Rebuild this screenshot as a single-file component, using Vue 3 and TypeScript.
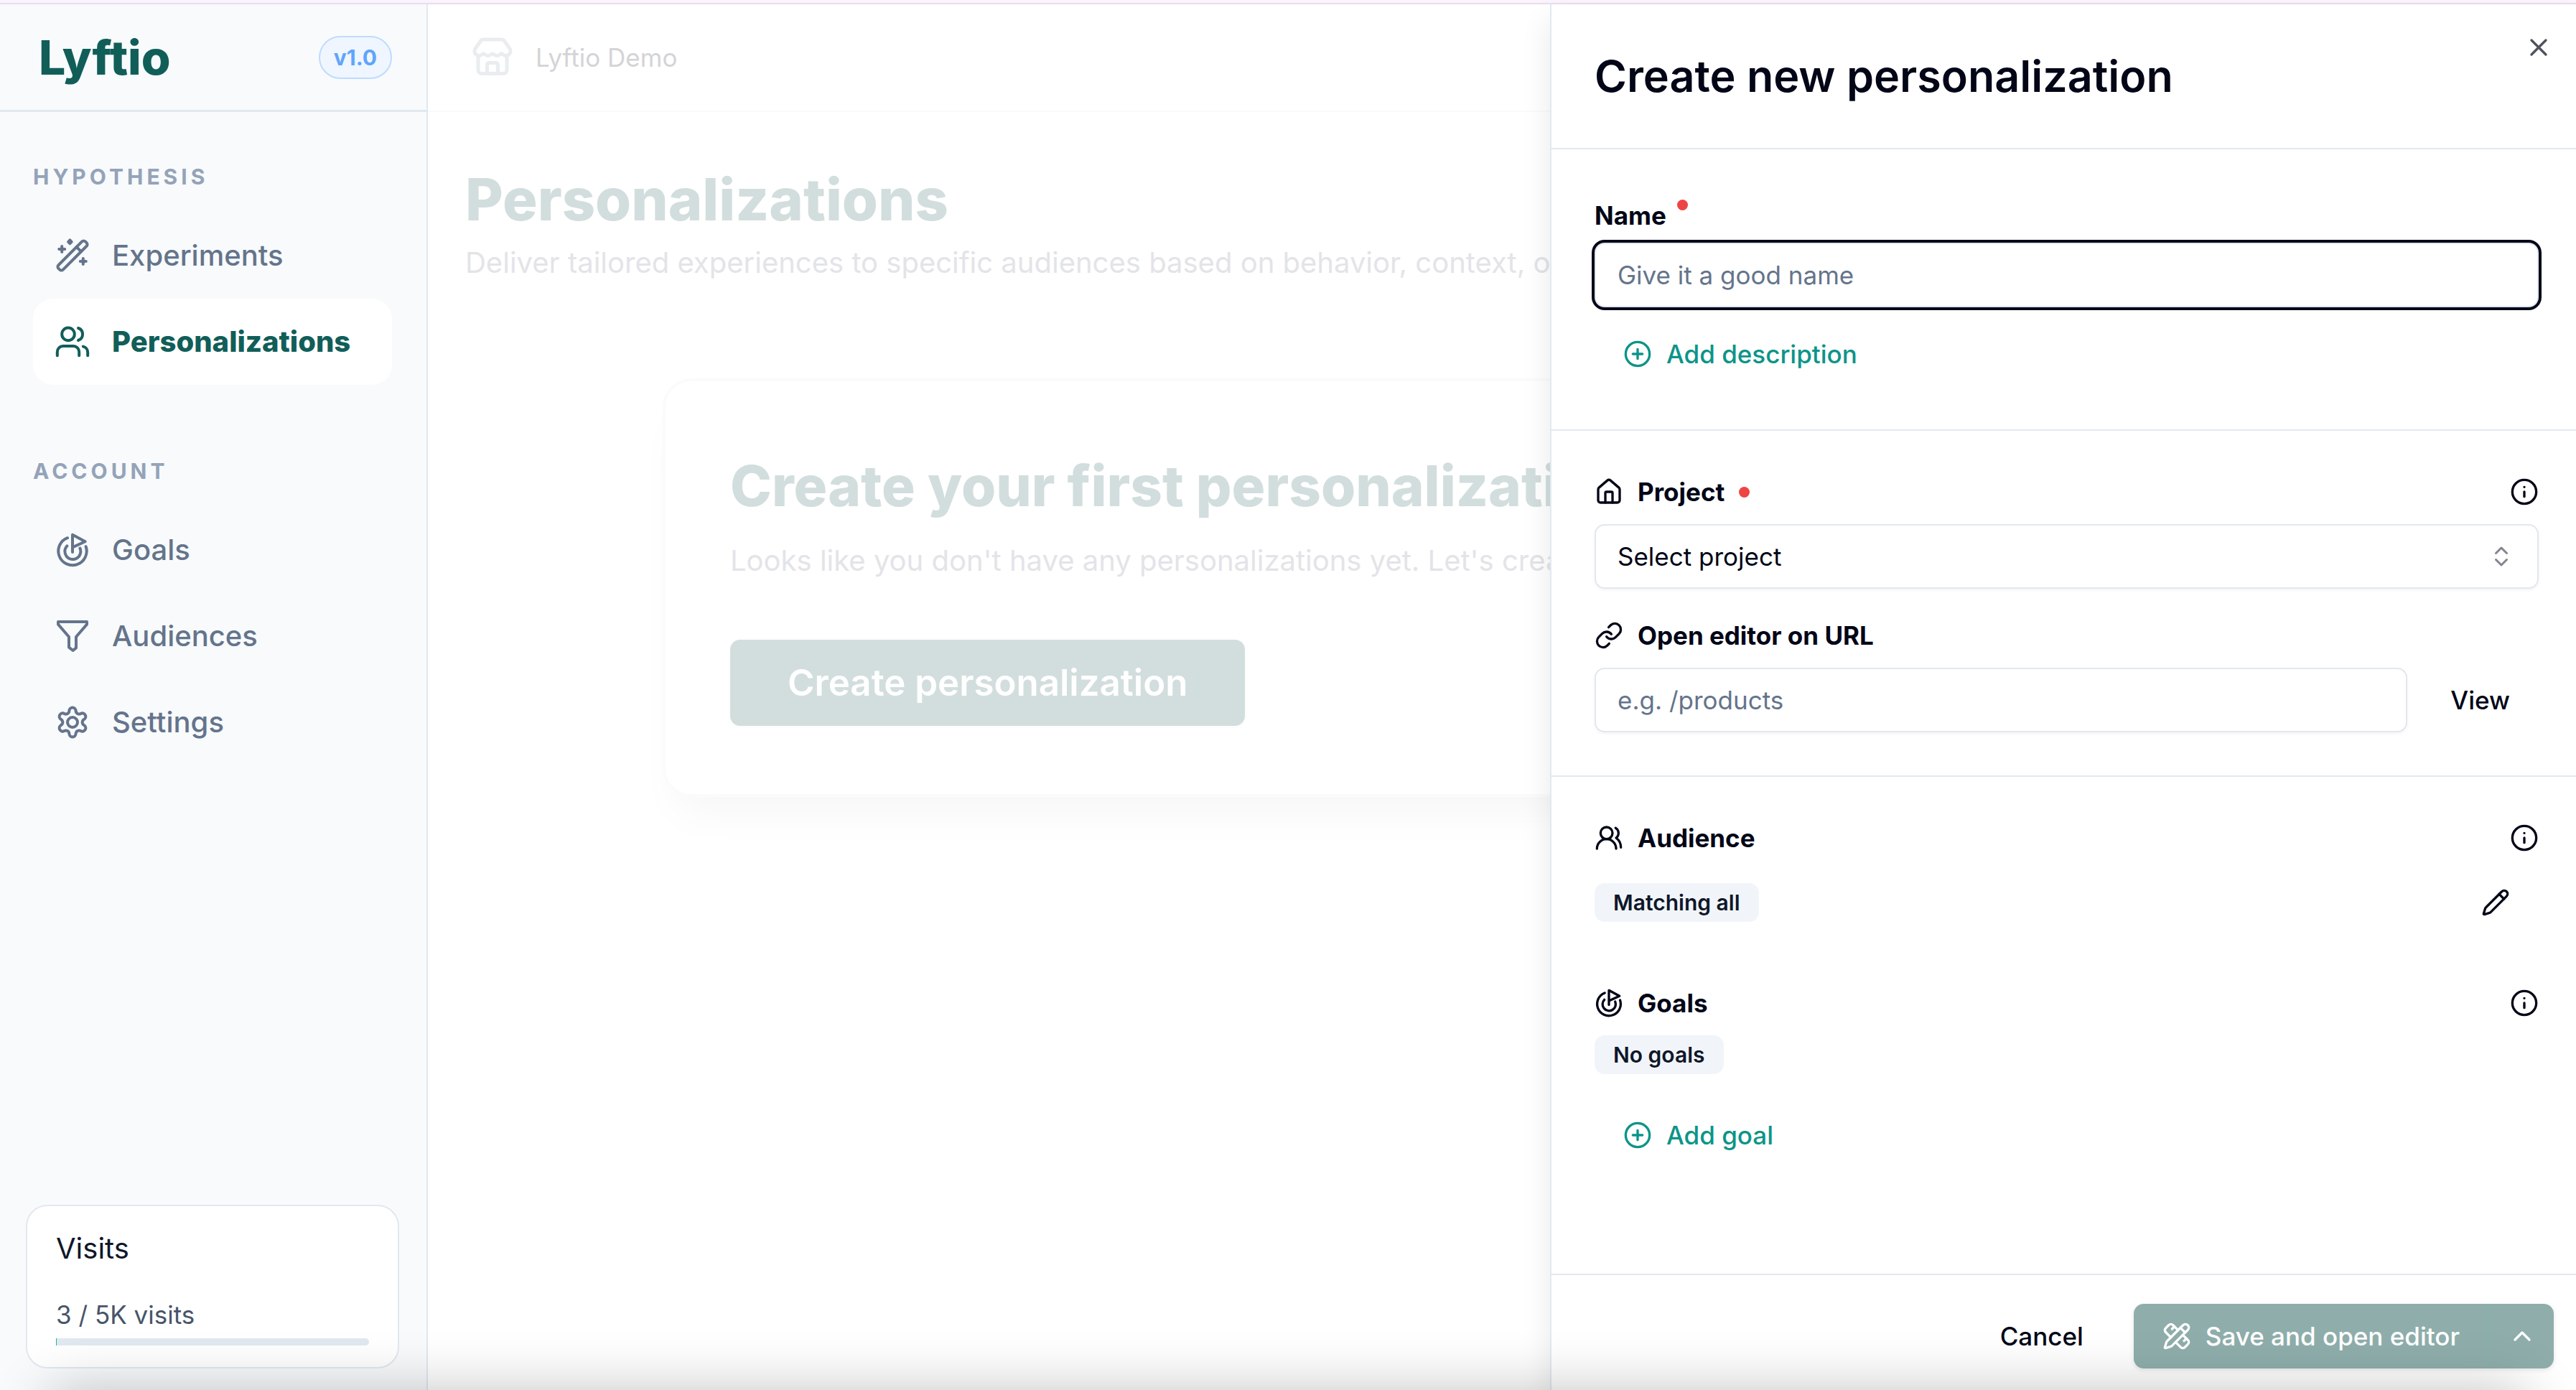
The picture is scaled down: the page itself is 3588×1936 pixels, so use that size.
<script setup lang="ts">
import { computed, h, ref } from 'vue'
import type { FunctionalComponent } from 'vue'

const pencil = [
  'M21.174 6.812a1 1 0 0 0-3.986-3.987L3.842 16.174a2 2 0 0 0-.5.830l-1.321 4.352a.5.5 0 0 0 .623.622l4.353-1.320a2 2 0 0 0 .830-.497z',
  'm15 5 4 4',
]

const glyphs: Record<string, string[]> = {
  wand: [
    'M18.600 2.200a1.600 1.600 0 0 1 2.300 0l.9.9a1.600 1.600 0 0 1 0 2.300L5.400 21.800a1.600 1.600 0 0 1-2.300 0l-.9-.9a1.600 1.600 0 0 1 0-2.300z',
    'm14.800 6 3.200 3.200',
    'M4.600 5.500v4M2.600 7.500h4M19.400 14v4M17.400 16h4',
    'm10.200 1.200 1.100 1.200-1.100 1.200-1.100-1.200z',
  ],
  people: [
    'M9 11.100a4.400 4.400 0 1 0 0-8.800 4.400 4.400 0 0 0 0 8.800z',
    'M1.400 21.600V19a4 4 0 0 1 4-4h7.200a4 4 0 0 1 4 4v2.600',
    'M16 2.500a4.500 4.500 0 0 1 0 8.500',
    'M19.400 15.300a4.200 4.200 0 0 1 3.200 4v2.300',
  ],
  goal: [
    'M12 13.500V1.400l8.800 4.700L12 10.200',
    'M8.500 3.600A9.840 9.840 0 1 0 21.300 9.600',
    'M8.200 9.200A5.500 5.500 0 1 0 17.200 10.800',
  ],
  funnel: ['M2 2h20v1.800l-7.500 8.700v7.700L12.300 22l-2.800-2.200v-7.300L2 3.800z'],
  gear: [
    'M12 15.500a3.500 3.500 0 1 0 0-7 3.500 3.500 0 0 0 0 7z',
    'M9.700 4.100a2.300 2.300 0 0 1 4.600 0 2.300 2.300 0 0 0 3.400 1.900 2.300 2.300 0 0 1 2.300 4 2.300 2.300 0 0 0 0 4 2.300 2.300 0 0 1-2.300 4 2.300 2.300 0 0 0-3.400 1.900 2.300 2.300 0 0 1-4.600 0A2.300 2.300 0 0 0 6.300 18 2.300 2.300 0 0 1 4 14a2.300 2.300 0 0 0 0-4 2.300 2.300 0 0 1 2.300-4 2.300 2.300 0 0 0 3.400-1.900',
  ],
  store: [
    'M15 21v-5a1 1 0 0 0-1-1h-4a1 1 0 0 0-1 1v5',
    'M17.774 10.310a1.120 1.120 0 0 0-1.549 0 2.500 2.500 0 0 1-3.451 0 1.120 1.120 0 0 0-1.548 0 2.500 2.500 0 0 1-3.452 0 1.120 1.120 0 0 0-1.549 0 2.500 2.500 0 0 1-3.770-3.248l2.889-4.184A2 2 0 0 1 7 2h10a2 2 0 0 1 1.653.873l2.895 4.192a2.500 2.500 0 0 1-3.774 3.244',
    'M4 10.950V19a2 2 0 0 0 2 2h12a2 2 0 0 0 2-2v-8.050',
  ],
  plusCircle: ['M12 22a10 10 0 1 0 0-20 10 10 0 0 0 0 20z', 'M8 12h8M12 8v8'],
  info: ['M12 22a10 10 0 1 0 0-20 10 10 0 0 0 0 20z', 'M12 16v-4M12 8h.01'],
  home: [
    'M15 21v-8a1 1 0 0 0-1-1h-4a1 1 0 0 0-1 1v8',
    'M3 10a2 2 0 0 1 .709-1.528l7-5.999a2 2 0 0 1 2.582 0l7 5.999A2 2 0 0 1 21 10v9a2 2 0 0 1-2 2H5a2 2 0 0 1-2-2z',
  ],
  link: [
    'M10 13a5 5 0 0 0 7.540.540l3-3a5 5 0 0 0-7.070-7.070l-1.720 1.710',
    'M14 11a5 5 0 0 0-7.540-.540l-3 3a5 5 0 0 0 7.070 7.070l1.710-1.710',
  ],
  audience: [
    'M18 21a8 8 0 0 0-16 0',
    'M10 13a5 5 0 1 0 0-10 5 5 0 0 0 0 10z',
    'M22 20c0-3.370-2-6.500-4-8a5 5 0 0 0-.450-8.300',
  ],
  pencil,
  close: ['M18 6 6 18M6 6l12 12'],
  sort: ['m7 15 5 5 5-5M7 9l5-5 5 5'],
  up: ['m18 15-6-6-6 6'],
  design: [
    'M13 7 8.700 2.700a2.410 2.410 0 0 0-3.400 0L2.700 5.300a2.410 2.410 0 0 0 0 3.400L7 13',
    'm8 6 2-2M18 16l2-2',
    'm17 11 4.300 4.300c.940.940.940 2.460 0 3.400l-2.600 2.600c-.940.940-2.460.940-3.400 0L11 17',
    ...pencil,
  ],
}

const Icon: FunctionalComponent<{ name: string }> = (props) =>
  h(
    'svg',
    { viewBox: '0 0 24 24', class: 'icon', 'aria-hidden': 'true' },
    glyphs[props.name].map((d) => h('path', { d })),
  )
Icon.props = ['name']

const groups = [
  {
    title: 'HYPOTHESIS',
    items: [
      { label: 'Experiments', icon: 'wand', active: false },
      { label: 'Personalizations', icon: 'people', active: true },
    ],
  },
  {
    title: 'ACCOUNT',
    items: [
      { label: 'Goals', icon: 'goal', active: false },
      { label: 'Audiences', icon: 'funnel', active: false },
      { label: 'Settings', icon: 'gear', active: false },
    ],
  },
]

const visits = ref(3)
const quota = 5000
const usage = computed(() => `${(visits.value / quota) * 100}%`)

const name = ref('')
const url = ref('')
const project = ref('')
</script>

<template>
  <div class="app">
    <div class="strip"></div>
    <div class="shell">
      <aside class="sidebar">
        <div class="brand">
          <span class="logo">Lyftio</span>
          <span class="version">v1.0</span>
        </div>
        <nav class="nav">
          <section v-for="group in groups" :key="group.title" class="group">
            <h2 class="group-title">{{ group.title }}</h2>
            <a
              v-for="item in group.items"
              :key="item.label"
              href="#"
              class="nav-item"
              :class="{ active: item.active }"
            >
              <Icon :name="item.icon" />
              <span>{{ item.label }}</span>
            </a>
          </section>
        </nav>
        <div class="visits">
          <div class="visits-title">Visits</div>
          <div class="visits-count">{{ visits }} / 5K visits</div>
          <div class="meter"><div class="meter-fill" :style="{ width: usage }"></div></div>
        </div>
      </aside>

      <main class="main">
        <header class="topbar">
          <Icon name="store" />
          <span>Lyftio Demo</span>
        </header>
        <div class="content">
          <h1 class="page-title">Personalizations</h1>
          <p class="page-text">
            Deliver tailored experiences to specific audiences based on behavior, context, or intent.
          </p>
          <section class="card">
            <h2 class="card-title">Create your first personalization</h2>
            <p class="page-text">Looks like you don't have any personalizations yet. Let's create one.</p>
            <button type="button" class="card-button">Create personalization</button>
          </section>
        </div>
      </main>

      <form class="panel" @submit.prevent>
        <header class="panel-header">
          <h2 class="panel-title">Create new personalization</h2>
          <button type="button" class="icon-button close" aria-label="Close"><Icon name="close" /></button>
        </header>

        <section class="block name-block">
          <label for="name" class="name-label">Name<span class="dot"></span></label>
          <input id="name" v-model="name" class="field focused" type="text" placeholder="Give it a good name" />
          <button type="button" class="add"><Icon name="plusCircle" />Add description</button>
        </section>

        <section class="block">
          <div class="row">
            <label for="project" class="label"><Icon name="home" />Project<span class="dot"></span></label>
            <button type="button" class="icon-button" aria-label="About project"><Icon name="info" /></button>
          </div>
          <div class="select">
            <select id="project" v-model="project" class="field">
              <option value="">Select project</option>
            </select>
            <Icon name="sort" />
          </div>
          <div class="row spaced">
            <label for="url" class="label"><Icon name="link" />Open editor on URL</label>
          </div>
          <div class="url-row">
            <input id="url" v-model="url" class="field" type="text" placeholder="e.g. /products" />
            <button type="button" class="plain">View</button>
          </div>
        </section>

        <section class="block last">
          <div class="row">
            <h3 class="label"><Icon name="audience" />Audience</h3>
            <button type="button" class="icon-button" aria-label="About audience"><Icon name="info" /></button>
          </div>
          <div class="tag-row">
            <span class="tag">Matching all</span>
            <button type="button" class="plain" aria-label="Edit audience"><Icon name="pencil" /></button>
          </div>
          <div class="row goals-row">
            <h3 class="label"><Icon name="goal" />Goals</h3>
            <button type="button" class="icon-button" aria-label="About goals"><Icon name="info" /></button>
          </div>
          <span class="tag goals-tag">No goals</span>
          <button type="button" class="add goals-add"><Icon name="plusCircle" />Add goal</button>
        </section>

        <footer class="panel-footer">
          <button type="button" class="plain">Cancel</button>
          <div class="split">
            <button type="submit" class="save"><Icon name="design" />Save and open editor</button>
            <button type="button" class="more" aria-label="More save options"><Icon name="up" /></button>
          </div>
        </footer>
      </form>
    </div>
    <div class="bottom-shade"></div>
  </div>
</template>

<style>
body {
  margin: 0;
  background: #fff;
}
</style>

<style scoped>
.app {
  position: relative;
  display: flex;
  flex-direction: column;
  min-height: 100vh;
  overflow: hidden;
  background: #fff;
  color: #020617;
  font-family: Inter, 'Liberation Sans', sans-serif;
  font-size: 35px;
  line-height: 44px;
}
.app * {
  box-sizing: border-box;
}
h1,
h2,
h3,
p {
  margin: 0;
  font-size: inherit;
  font-weight: inherit;
}
button,
input,
select {
  margin: 0;
  padding: 0;
  border: 0;
  background: none;
  color: inherit;
  font: inherit;
}
.icon {
  flex: none;
  width: 40px;
  height: 40px;
  fill: none;
  stroke: currentColor;
  stroke-width: 2;
  stroke-linecap: round;
  stroke-linejoin: round;
}
.strip {
  height: 6px;
  background: #fbf3fd;
  border-bottom: 2px solid #e8deea;
}
.shell {
  position: relative;
  flex: 1;
  display: grid;
  grid-template-columns: 596px minmax(0, 1fr);
}

/* Sidebar */
.sidebar {
  display: flex;
  flex-direction: column;
  background: #f8fafc;
  border-right: 2px solid #e2e8f0;
}
.brand {
  display: flex;
  align-items: center;
  justify-content: space-between;
  height: 150px;
  padding: 0 48px 0 54px;
  border-bottom: 3px solid #e2e8f0;
}
.logo {
  color: #115e59;
  font-size: 66px;
  font-weight: 800;
  line-height: 80px;
}
.version {
  height: 60px;
  padding: 0 19px;
  border: 2px solid #bfdbfe;
  border-radius: 30px;
  background: #eff6ff;
  color: #60a5fa;
  font-size: 30px;
  font-weight: 700;
  line-height: 56px;
}
.nav {
  flex: 1;
  display: flex;
  flex-direction: column;
  gap: 95px;
  padding: 65px 48px 0 46px;
}
.group {
  display: flex;
  flex-direction: column;
}
.group-title {
  margin-bottom: 25px;
  color: #94a3b8;
  font-size: 30px;
  font-weight: 700;
  letter-spacing: 5px;
  line-height: 50px;
}
.nav-item {
  display: flex;
  align-items: center;
  gap: 31px;
  height: 120px;
  padding: 0 31px;
  border-radius: 28px;
  color: #64748b;
  font-size: 40px;
  font-weight: 500;
  text-decoration: none;
}
.nav-item .icon {
  width: 48px;
  height: 48px;
}
.nav-item.active {
  background: #fff;
  color: #115e59;
  font-weight: 800;
}
.visits {
  margin: 0 38px 30px 36px;
  padding: 29px 40px 30px;
  border: 2px solid #e2e8f0;
  border-radius: 30px;
  background: #fff;
}
.visits-title {
  color: #0f172a;
  font-size: 40px;
  line-height: 60px;
}
.visits-count {
  margin-top: 40px;
  color: #475569;
}
.meter {
  height: 10px;
  margin-top: 11px;
  border-radius: 0 5px 5px 0;
  background: #e2e8f0;
}
.meter-fill {
  min-width: 1px;
  height: 100%;
  background: #14b8a6;
}

/* Page behind the panel */
.main {
  min-width: 0;
  overflow: hidden;
}
.topbar {
  display: flex;
  align-items: center;
  gap: 30px;
  height: 150px;
  padding-left: 60px;
  border-bottom: 2px solid #f9fafb;
  color: #d3d4d7;
}
.topbar .icon {
  width: 60px;
  height: 60px;
  color: #e9edf0;
}
.content {
  padding: 72px 52px 0;
}
.page-title {
  color: #d2dedd;
  font-size: 81px;
  font-weight: 800;
  line-height: 100px;
}
.page-text {
  margin-top: 10px;
  color: #e3e4e8;
  font-size: 40px;
  line-height: 56px;
  white-space: nowrap;
}
.card {
  max-width: 2338px;
  margin: 133px auto 0;
  padding: 96px 90px 95px;
  border: 4px solid #fafbfb;
  border-radius: 40px;
  box-shadow: 0 40px 60px -20px rgba(0, 0, 0, 0.04);
}
.card-title {
  color: #d2dedd;
  font-size: 78px;
  font-weight: 800;
  line-height: 100px;
  white-space: nowrap;
}
.card .page-text {
  margin-top: 26px;
}
.card-button {
  display: block;
  height: 120px;
  margin-top: 82px;
  padding: 0 80px;
  border-radius: 14px;
  background: #d2dedd;
  box-shadow: 0 2px 6px rgba(0, 0, 0, 0.02);
  color: #fff;
  font-size: 51px;
  font-weight: 600;
}

/* Slide-over panel */
.panel {
  position: absolute;
  inset: 0 0 0 auto;
  display: flex;
  flex-direction: column;
  width: 40%;
  max-width: 1429px;
  border-left: 2px solid #e2e8f0;
  background: #fff;
  box-shadow: 0 20px 40px rgba(0, 0, 0, 0.09);
}
.panel-header {
  display: flex;
  align-items: center;
  justify-content: space-between;
  height: 202px;
  padding: 0 32px 0 60px;
  border-bottom: 2px solid #e2e8f0;
}
.panel-title {
  font-size: 61px;
  font-weight: 600;
  line-height: 80px;
}
.icon-button {
  display: flex;
}
.close {
  align-self: flex-start;
  margin-top: 40px;
  color: #4e525d;
}
.block {
  display: flex;
  flex-direction: column;
  padding: 60px 52px 60px 60px;
  border-bottom: 2px solid #e2e8f0;
}
.block.last {
  flex: 1;
  border-bottom: 0;
}
.name-block {
  padding-top: 70px;
}
.name-label {
  display: flex;
  gap: 15px;
  margin-bottom: 16px;
  font-weight: 700;
}
.dot {
  width: 15px;
  height: 15px;
  border-radius: 50%;
  background: #ef4444;
}
.field {
  width: 100%;
  height: 90px;
  padding: 0 30px;
  border: 2px solid #e2e8f0;
  border-radius: 14px;
  background: #fff;
  box-shadow: 0 2px 4px rgba(0, 0, 0, 0.05);
  outline: 0;
  appearance: none;
}
.field::placeholder {
  color: #64748b;
  opacity: 1;
}
.field.focused {
  box-shadow: 0 0 0 4px #020617;
}
.add {
  display: flex;
  align-items: center;
  align-self: flex-start;
  gap: 20px;
  height: 90px;
  margin-top: 20px;
  padding: 0 40px;
  color: #0d9488;
  font-weight: 500;
}
.row {
  display: flex;
  align-items: center;
  justify-content: space-between;
  height: 50px;
  margin-bottom: 20px;
}
.row.spaced {
  margin-top: 40px;
}
.label {
  display: flex;
  align-items: center;
  gap: 20px;
  font-weight: 700;
}
.select {
  display: grid;
  align-items: center;
}
.select > * {
  grid-area: 1 / 1;
}
.select .icon {
  width: 36px;
  height: 36px;
  justify-self: end;
  margin-right: 34px;
  color: #84868f;
  pointer-events: none;
}
.url-row {
  display: flex;
  gap: 20px;
}
.url-row .field {
  flex: 1;
}
.plain {
  display: flex;
  align-items: center;
  height: 90px;
  padding: 0 40px;
  font-weight: 500;
}
.tag-row {
  display: flex;
  align-items: center;
  justify-content: space-between;
}
.tag {
  height: 54px;
  padding: 0 26px;
  border-radius: 14px;
  background: #f1f5f9;
  color: #0f172a;
  font-size: 30px;
  font-weight: 600;
  line-height: 54px;
}
.goals-row {
  margin-top: 70px;
}
.goals-tag {
  align-self: flex-start;
}
.goals-add {
  margin-top: 40px;
}
.panel-footer {
  display: flex;
  justify-content: flex-end;
  gap: 30px;
  padding: 40px 31px 30px;
  border-top: 2px solid #e2e8f0;
}
.split {
  display: flex;
  border-radius: 14px;
  background: #8faeab;
  box-shadow: 0 2px 6px rgba(0, 0, 0, 0.1);
  color: #fff;
}
.save {
  display: flex;
  align-items: center;
  gap: 20px;
  height: 90px;
  padding: 0 40px;
  font-weight: 500;
}
.more {
  display: flex;
  align-items: center;
  justify-content: center;
  width: 91px;
  border-left: 2px solid #86b3ac;
}

/* Soft shade along the lower window edge */
.bottom-shade {
  position: absolute;
  right: 70px;
  bottom: -200px;
  left: 70px;
  height: 200px;
  box-shadow: 0 0 80px rgba(0, 0, 0, 0.24);
  pointer-events: none;
}
</style>
